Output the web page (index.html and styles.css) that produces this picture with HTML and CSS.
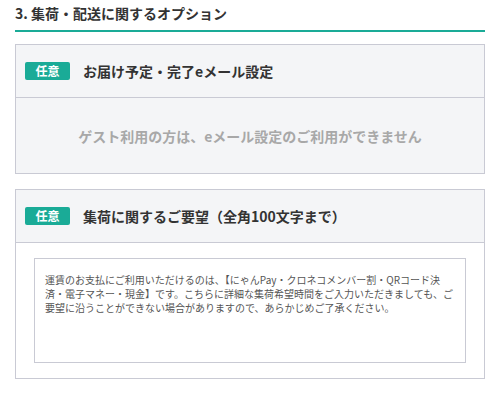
FILE: index.html
```html
<!DOCTYPE html>
<html lang="ja">
<head>
  <meta charset="UTF-8" />
  <title>集荷・配送に関するオプション</title>
  <link rel="stylesheet" href="styles.css">
</head>
<body>
  <div class="container">
    <h2 class="section-title">3. 集荷・配送に関するオプション</h2>

    <!-- eメール設定 -->
    <div class="option-box">
      <div class="option-head">
        <span class="badge">任意</span>
        <span class="option-label">お届け予定・完了eメール設定</span>
      </div>
      <div class="option-body disabled">
        ゲスト利用の方は、eメール設定のご利用ができません
      </div>
    </div>

    <!-- 集荷に関するご要望 -->
    <div class="option-box">
      <div class="option-head">
        <span class="badge">任意</span>
        <span class="option-label">集荷に関するご要望（全角100文字まで）</span>
      </div>
      <div class="option-body">
        <textarea class="request" placeholder="運賃のお支払にご利用いただけるのは、【にゃんPay・クロネコメンバー割・QRコード決済・電子マネー・現金】です。こちらに詳細な集荷希望時間をご入力いただきましても、ご要望に沿うことができない場合がありますので、あらかじめご了承ください。"></textarea>
      </div>
    </div>
  </div>
</body>
</html>
```

FILE: styles.css
```css
body {
  margin: 0;
  padding: 0;
  background: #fff;
  color: #333;
  font-family: "Noto Sans CJK JP", "Noto Sans", sans-serif;
}
.container {
  padding: 0 15px;
}
.section-title {
  margin: 0 0 12px;
  padding: 4px 0 7px;
  font-size: 14px;
  line-height: 19px;
  font-weight: bold;
  color: #333;
  border-bottom: 2px solid #1aab97;
}
.option-box {
  border: 1px solid #c9cad4;
  margin-bottom: 15px;
}
.option-head {
  display: flex;
  align-items: center;
  height: 52px;
  padding: 0 9px;
  background: #f4f5f7;
  border-bottom: 1px solid #c9cad4;
}
.badge {
  width: 45px;
  height: 18px;
  line-height: 18px;
  text-align: center;
  background: #1aab97;
  color: #fff;
  font-size: 12px;
  font-weight: bold;
  border-radius: 2px;
  margin-right: 13px;
}
.option-label {
  font-size: 14px;
  font-weight: bold;
  color: #333;
}
.option-body {
  padding: 15px 18px;
}
.option-body.disabled {
  padding: 0;
  height: 75px;
  display: flex;
  align-items: center;
  justify-content: center;
  background: #f4f5f7;
  color: #a8a8a8;
  font-size: 14px;
  font-weight: bold;
}
textarea.request {
  display: block;
  box-sizing: border-box;
  width: 100%;
  height: 105px;
  margin: 0;
  padding: 14px 8px 14px 10px;
  border: 1px solid #c9cad4;
  border-radius: 0;
  resize: none;
  font-family: "Noto Sans CJK JP", sans-serif;
  font-size: 10px;
  line-height: 14px;
}
textarea.request::placeholder {
  color: #555;
  opacity: 1;
}
```
